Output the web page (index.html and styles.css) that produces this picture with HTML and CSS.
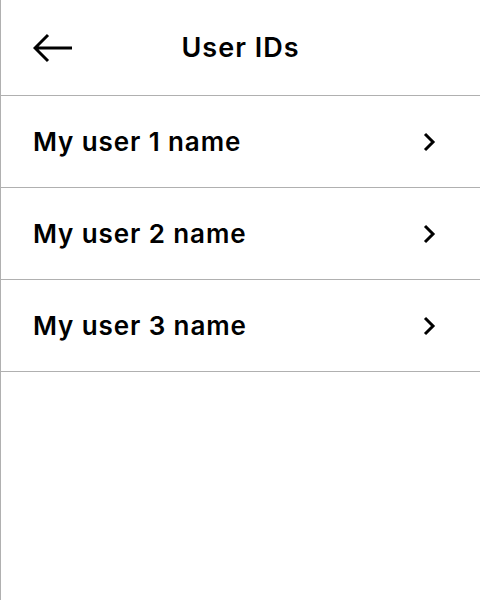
FILE: index.html
```html
<!DOCTYPE html>
<html>
<head>
<meta charset="utf-8">
<link rel="stylesheet" href="styles.css">
</head>
<body>
<div class="screen">
  <header class="header">
    <button class="back" aria-label="Back">
      <svg width="40" height="30" viewBox="0 0 40 30"><path d="M39 15H3M15 2L2 15l13 13" fill="none" stroke="#000" stroke-width="3"/></svg>
    </button>
    <h1 class="title">User IDs</h1>
  </header>
  <ul class="list">
    <li class="row"><span class="name">My user 1 name</span><svg class="chev" width="14" height="20" viewBox="0 0 14 20"><path d="M3 2l8 8-8 8" fill="none" stroke="#000" stroke-width="3"/></svg></li>
    <li class="row"><span class="name">My user 2 name</span><svg class="chev" width="14" height="20" viewBox="0 0 14 20"><path d="M3 2l8 8-8 8" fill="none" stroke="#000" stroke-width="3"/></svg></li>
    <li class="row"><span class="name">My user 3 name</span><svg class="chev" width="14" height="20" viewBox="0 0 14 20"><path d="M3 2l8 8-8 8" fill="none" stroke="#000" stroke-width="3"/></svg></li>
  </ul>
</div>
</body>
</html>
```
FILE: styles.css
```css
html, body { margin: 0; padding: 0; background: #fff; }
body { font-family: Inter, "Noto Sans", sans-serif; color: #000; }
.screen {
  width: 480px;
  height: 600px;
  box-sizing: border-box;
  border-left: 1px solid #b0b0b0;
}
.header {
  height: 95px;
  border-bottom: 1px solid #b0b0b0;
  display: flex;
  align-items: center;
  position: relative;
}
.back {
  border: 0;
  background: none;
  padding: 0;
  margin-left: 32px;
  display: flex;
}
.title {
  position: absolute;
  left: 0; right: 0;
  margin: 0;
  text-align: center;
  font-size: 27px;
  font-weight: 600;
  letter-spacing: 1px;
  pointer-events: none;
}
.list { list-style: none; margin: 0; padding: 0; }
.row {
  height: 91px;
  border-bottom: 1px solid #b0b0b0;
  display: flex;
  align-items: center;
  justify-content: space-between;
  padding: 0 44px 0 32px;
}
.name { font-size: 26px; font-weight: 600; letter-spacing: 0.9px; }
.chev { display: block; }
```
